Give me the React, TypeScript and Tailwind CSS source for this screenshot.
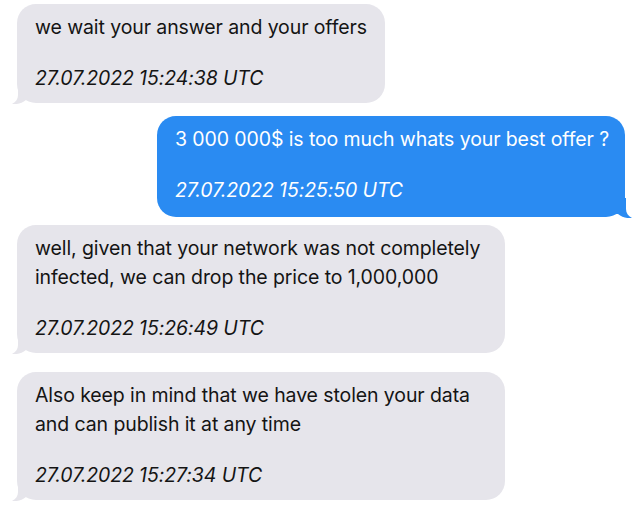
import React from "react";

const GRAY = "#e6e5eb";
const BLUE = "#2a8bf2";

function Tail({ side, color }: { side: "left" | "right"; color: string }) {
  const isLeft = side === "left";
  return (
    <svg
      width="20"
      height="20"
      viewBox="0 0 20 20"
      className={isLeft ? "absolute -left-[5px] bottom-[-1px]" : "absolute -right-[7px] bottom-[-1px]"}
      style={isLeft ? undefined : { transform: "scaleX(-1)" }}
    >
      <path d="M6 0 L6 11 C6 15 4 18 0 20 C5 20.5 10 19.5 14 16 L20 16 L20 0 Z" fill={color} />
    </svg>
  );
}

function Bubble({
  lines,
  time,
  side,
  width,
  className,
  pb,
}: {
  lines: string[];
  time: string;
  side: "left" | "right";
  width: string;
  className?: string;
  pb: string;
}) {
  const isLeft = side === "left";
  const color = isLeft ? GRAY : BLUE;
  return (
    <div className={`relative ${width} ${className ?? ""}`}>
      <div
        className={`relative z-10 rounded-[19px] pl-[18px] pr-[14px] pt-[9px] ${pb} ${
          isLeft ? "bg-[#e6e5eb] text-[#141414]" : "bg-[#2a8bf2] text-white"
        }`}
      >
        {lines.map((l, i) => (
          <div key={i} className="text-[19.5px] leading-[29px] whitespace-nowrap tracking-[-0.1px]">
            {l}
          </div>
        ))}
        <div className="mt-[23px] text-[19.5px] leading-[27px] italic whitespace-nowrap tracking-[-0.1px]">
          {time}
        </div>
      </div>
      <div className="absolute inset-0 z-0">
        <Tail side={side} color={color} />
      </div>
    </div>
  );
}

export default function App() {
  return (
    <div
      className="w-[640px] h-[506px] bg-white overflow-hidden flex flex-col"
      style={{ fontFamily: "Inter, 'Noto Sans', sans-serif" }}
    >
      <Bubble
        side="left"
        width="w-[368px]"
        className="ml-[17px] mt-[4px]"
        pb="pb-[11px]"
        lines={["we wait your answer and your offers"]}
        time="27.07.2022 15:24:38 UTC"
      />
      <Bubble
        side="right"
        width="w-[468px]"
        className="ml-[157px] mt-[13px]"
        pb="pb-[13px]"
        lines={["3 000 000$ is too much whats your best offer ?"]}
        time="27.07.2022 15:25:50 UTC"
      />
      <Bubble
        side="left"
        width="w-[488px]"
        className="ml-[17px] mt-[8px]"
        pb="pb-[11px]"
        lines={["well, given that your network was not completely", "infected, we can drop the price to 1,000,000"]}
        time="27.07.2022 15:26:49 UTC"
      />
      <Bubble
        side="left"
        width="w-[488px]"
        className="ml-[17px] mt-[19px]"
        pb="pb-[11px]"
        lines={["Also keep in mind that we have stolen your data", "and can publish it at any time"]}
        time="27.07.2022 15:27:34 UTC"
      />
    </div>
  );
}
